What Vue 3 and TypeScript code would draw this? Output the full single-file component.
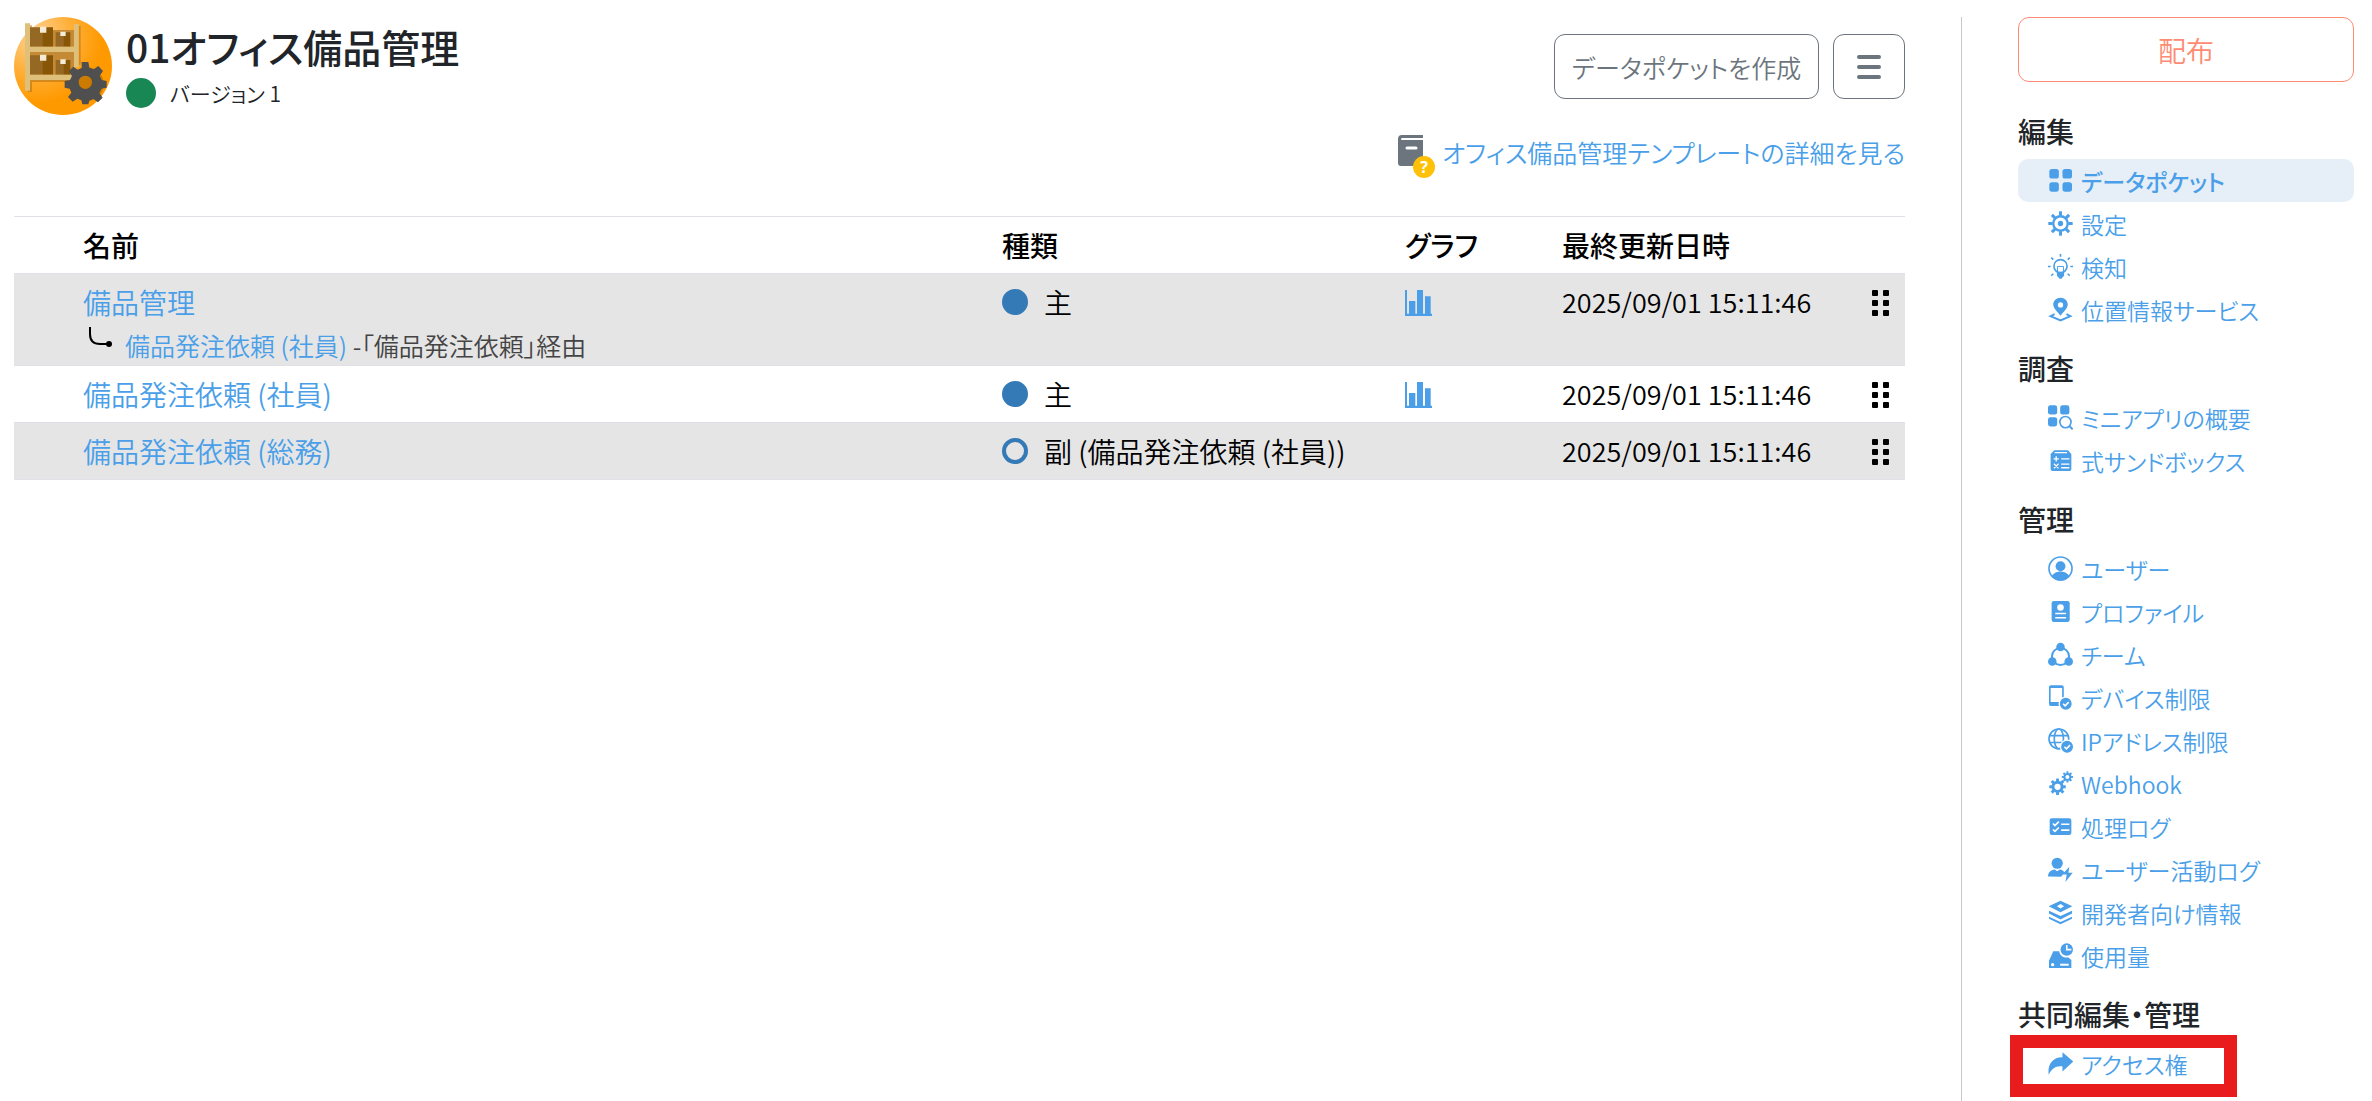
<script setup lang="ts">
interface NavItem {
  label: string
  icon: string
  active?: boolean
  marked?: boolean
}

interface NavSection {
  title: string
  items: NavItem[]
}

interface Pocket {
  name: string
  kind: string
  primary: boolean
  updated: string
  child?: { name: string; via: string }
}

const teeth = (cx: number, cy: number, from: number, to: number, width: number, step = 45): string => {
  let out = ''
  for (let a = 0; a < 360; a += step) {
    out += `<line x1="${cx}" y1="${cy - from}" x2="${cx}" y2="${cy - to}" stroke="currentColor" stroke-width="${width}" transform="rotate(${a} ${cx} ${cy})"/>`
  }
  return out
}

const badge = (cx: number, cy: number): string =>
  `<circle cx="${cx}" cy="${cy}" r="22" fill="#fff"/><circle cx="${cx}" cy="${cy}" r="18"/>` +
  `<path d="M${cx - 8} ${cy}l6 6 11-11" fill="none" stroke="#fff" stroke-width="5"/>`

const icons: Record<string, string> = {
  grid: '<rect x="4" y="3" width="29" height="29" rx="8"/><rect x="44" y="3" width="29" height="29" rx="8"/><rect x="4" y="43" width="29" height="29" rx="8"/><rect x="44" y="43" width="29" height="29" rx="8"/>',
  gear: '<circle cx="38" cy="38" r="22" fill="none" stroke="currentColor" stroke-width="7"/><circle cx="38" cy="38" r="8"/>' + teeth(38, 38, 24, 37, 9),
  bulb:
    '<circle cx="38" cy="37" r="20" fill="none" stroke="currentColor" stroke-width="5"/><path d="M29 54V38h18v16" fill="none" stroke="currentColor" stroke-width="3"/><path d="M27 54h22v10q0 4-4 6l-4 5h-6l-4-5q-4-2-4-6z"/>' +
    '<path d="M38 0v8M0 38h8M68 38h8M10 11l6 6M66 11l-6 6M10 66l6-6M66 66l-6-6" stroke="currentColor" stroke-width="5"/>',
  pin: '<path fill-rule="evenodd" d="M38 2c13 0 22 9 22 21 0 12-13 22-22 34C29 45 16 35 16 23 16 11 25 2 38 2zm0 14a8 8 0 1 0 0 16 8 8 0 0 0 0-16z"/><path d="M20 52L8 58l30 13 30-13-12-6" fill="none" stroke="currentColor" stroke-width="6"/>',
  overview:
    '<rect x="0" y="1" width="28" height="28" rx="7"/><rect x="37" y="1" width="28" height="28" rx="7"/><rect x="0" y="37" width="28" height="28" rx="7"/><circle cx="53" cy="52" r="22" fill="#fff"/><circle cx="53" cy="52" r="17" fill="none" stroke="currentColor" stroke-width="5"/><path d="M65 64l10 10" stroke="currentColor" stroke-width="6"/>',
  sandbox:
    '<path d="M19 7h42l10 11v46q0 6-6 6H14q-6 0-6-6V18z"/><g stroke="#fff" stroke-width="4" fill="none"><path d="M20 14h38M17 33h16M25 25v16M40 33h25M18 48l14 14M32 48L18 62M40 49h25M40 60h25"/></g>',
  user: '<circle cx="38" cy="38" r="35" fill="none" stroke="currentColor" stroke-width="5"/><circle cx="38" cy="31" r="15"/><path d="M11 61C20 49 29 47 38 47s18 2 27 14C52 79 24 79 11 61z"/>',
  profile: '<rect x="11" y="6" width="55" height="64" rx="7"/><circle cx="38" cy="26" r="10" fill="#fff"/><path d="M22 44h33M22 57h33" stroke="#fff" stroke-width="5"/>',
  team: '<circle cx="38" cy="44" r="26" fill="none" stroke="currentColor" stroke-width="6"/><circle cx="38" cy="15" r="13"/><circle cx="13" cy="59" r="13"/><circle cx="63" cy="59" r="13"/>',
  device:
    '<path fill-rule="evenodd" d="M9 1h33q6 0 6 6v57H9q-6 0-6-6V7q0-6 6-6zm-1 8v43h35V9z"/>' + badge(54, 57),
  globe:
    '<g fill="none" stroke="currentColor" stroke-width="5"><circle cx="33" cy="33" r="30"/><ellipse cx="33" cy="33" rx="14" ry="30"/><path d="M4 23h58M4 44h58"/></g>' + badge(58, 57),
  gears:
    '<circle cx="29" cy="48" r="14" fill="none" stroke="currentColor" stroke-width="9"/>' + teeth(29, 48, 16, 25, 9) +
    '<circle cx="59" cy="18" r="9" fill="none" stroke="currentColor" stroke-width="6"/>' + teeth(59, 18, 10, 17, 6),
  tasks:
    '<rect x="5" y="13" width="66" height="51" rx="7"/><g fill="none" stroke="#fff" stroke-width="5"><path d="M15 29l6 6 12-12M15 47l6 6 12-12M40 31h25M40 49h25"/></g>',
  activity:
    '<circle cx="28" cy="19" r="17"/><path d="M0 59c1-14 9-19 20-21l8 5 8-5c7 1 11 4 14 9L40 60z"/><path d="M65 30L43 53h14l-4 23 22-28H62z" fill="currentColor"/>',
  layers:
    '<path fill-rule="evenodd" d="M38 2l36 17-36 18L2 19zm0 10l-11 7 11 7 11-7z"/><path d="M3 33l35 16 35-16v8L38 59 3 41zM3 51l35 16 35-16v6L38 74 3 57z"/>',
  usage:
    '<path d="M16 25h18c2 14 14 21 28 19l9 8v24H3V54z"/><circle cx="57" cy="20" r="19"/><path d="M57 6v14h14" fill="none" stroke="#fff" stroke-width="5"/><circle cx="14" cy="66" r="5" fill="#fff"/><path d="M37 66h26" stroke="#fff" stroke-width="6"/>',
  share: '<path d="M44 4l33 28-33 30V47C24 44 11 54 2 72-2 42 14 18 44 19z"/>',
}

const sections: NavSection[] = [
  {
    title: '編集',
    items: [
      { label: 'データポケット', icon: 'grid', active: true },
      { label: '設定', icon: 'gear' },
      { label: '検知', icon: 'bulb' },
      { label: '位置情報サービス', icon: 'pin' },
    ],
  },
  {
    title: '調査',
    items: [
      { label: 'ミニアプリの概要', icon: 'overview' },
      { label: '式サンドボックス', icon: 'sandbox' },
    ],
  },
  {
    title: '管理',
    items: [
      { label: 'ユーザー', icon: 'user' },
      { label: 'プロファイル', icon: 'profile' },
      { label: 'チーム', icon: 'team' },
      { label: 'デバイス制限', icon: 'device' },
      { label: 'IPアドレス制限', icon: 'globe' },
      { label: 'Webhook', icon: 'gears' },
      { label: '処理ログ', icon: 'tasks' },
      { label: 'ユーザー活動ログ', icon: 'activity' },
      { label: '開発者向け情報', icon: 'layers' },
      { label: '使用量', icon: 'usage' },
    ],
  },
  {
    title: '共同編集・管理',
    items: [{ label: 'アクセス権', icon: 'share', marked: true }],
  },
]

const pockets: Pocket[] = [
  {
    name: '備品管理',
    kind: '主',
    primary: true,
    updated: '2025/09/01 15:11:46',
    child: { name: '備品発注依頼 (社員)', via: '-「備品発注依頼」経由' },
  },
  { name: '備品発注依頼 (社員)', kind: '主', primary: true, updated: '2025/09/01 15:11:46' },
  { name: '備品発注依頼 (総務)', kind: '副 (備品発注依頼 (社員))', primary: false, updated: '2025/09/01 15:11:46' },
]
</script>

<template>
  <div class="page">
    <main class="main">
      <header class="header">
        <svg class="avatar" viewBox="42 51 294 294" aria-hidden="true">
          <defs>
            <radialGradient id="disc" cx="0.22" cy="0.2" r="0.8">
              <stop offset="0" stop-color="#ffd296" />
              <stop offset="0.45" stop-color="#ffb03a" />
              <stop offset="0.85" stop-color="#ff9900" />
            </radialGradient>
          </defs>
          <circle cx="189" cy="198" r="147" fill="url(#disc)" />
          <g fill="#b87518" opacity="0.6">
            <path d="M88 76h8v200H84v-6h4zM236 78h6v116h-6zM92 240h112v6H92z" />
          </g>
          <path fill="#c48a35" d="M90 90h132v50H90zM90 156h132v68H90z" />
          <path fill="#956823" d="M90 82h37v58H90zM167 97h23v43h-23zM90 166h37v58H90zM167 180h23v44h-23z" />
          <path fill="#875707" d="M127 82h32v58h-32zM190 97h21v43h-21zM127 166h32v58h-32zM190 180h21v44h-21z" />
          <path fill="#f5ecd8" d="M120 80h19v18h-19zM181 95h16v13h-16zM120 164h19v18h-19zM181 178h16v14h-16z" />
          <path fill="#dfc07a" d="M75 70h15v202H75zM222 72h14v130h-14zM75 140h161v16H75zM75 224h150v16H75z" />
          <g transform="translate(256 247)">
            <g fill="#9a5c00" opacity="0.5" transform="translate(5 5)"><circle r="50" /></g>
            <g fill="#4f4f4f">
              <path
                fill-rule="evenodd"
                d="M-11-61H9l3 17 13 5 14-10 14 15-10 14 6 13 15 3V16l-16 3-6 13 10 14-14 14-14-10-12 5-3 11h-18l-3-12-12-5-14 9-14-14 10-13-5-12-15-3v-20l16-3 6-12-10-14 14-14 13 9 12-5zM0-20a20 20 0 1 0 0 40 20 20 0 0 0 0-40z"
              />
            </g>
          </g>
        </svg>
        <div class="heading">
          <h1 class="title">01オフィス備品管理</h1>
          <div class="version"><span class="status"></span>バージョン 1</div>
        </div>
        <div class="actions">
          <button type="button" class="btn create">データポケットを作成</button>
          <button type="button" class="btn menu" aria-label="メニュー">
            <svg viewBox="0 0 24 24" width="24" height="24" aria-hidden="true">
              <path d="M2 2h20M2 12h20M2 22h20" stroke="currentColor" stroke-width="4" stroke-linecap="round" />
            </svg>
          </button>
        </div>
      </header>

      <a class="guide" href="#">
        <svg viewBox="0 0 37 43" width="37" height="43" aria-hidden="true">
          <path fill="#6c757d" d="M4 0h21v3H4q-1 0-1 2h22v26H3q-3 0-3-3V4q0-4 4-4z" />
          <path stroke="#fff" stroke-width="3" stroke-linecap="round" d="M9 13h9" />
          <circle cx="26" cy="32" r="11" fill="#ffc107" />
          <text x="26" y="38" text-anchor="middle" class="mark">?</text>
        </svg>
        <span>オフィス備品管理テンプレートの詳細を見る</span>
      </a>

      <table class="pockets">
        <colgroup>
          <col class="c-lead" />
          <col />
          <col class="c-kind" />
          <col class="c-graph" />
          <col class="c-date" />
          <col class="c-grip" />
        </colgroup>
        <thead>
          <tr>
            <th></th>
            <th>名前</th>
            <th>種類</th>
            <th>グラフ</th>
            <th>最終更新日時</th>
            <th></th>
          </tr>
        </thead>
        <tbody>
          <tr v-for="p in pockets" :key="p.name">
            <td></td>
            <td :class="{ nested: p.child }">
              <a href="#">{{ p.name }}</a>
              <div v-if="p.child" class="child">
                <svg viewBox="0 0 24 22" width="24" height="22" aria-hidden="true">
                  <path d="M1 0v7q0 10 10 10h8" fill="none" stroke="#000" stroke-width="2" />
                  <circle cx="20" cy="17" r="3" />
                </svg>
                <span><a href="#">{{ p.child.name }}</a> {{ p.child.via }}</span>
              </div>
            </td>
            <td>
              <span class="kind"><span class="dot" :class="{ hollow: !p.primary }"></span>{{ p.kind }}</span>
            </td>
            <td>
              <a v-if="p.primary" href="#" class="graph" aria-label="グラフ">
                <svg viewBox="0 0 81 78" width="27" height="26" aria-hidden="true">
                  <path fill="currentColor" d="M0 0h6v71h6V33h19v38h5V0h18v71h6V19h17v52h4v7H0z" />
                </svg>
              </a>
            </td>
            <td class="date">{{ p.updated }}</td>
            <td>
              <svg class="grip" viewBox="0 0 17 26" width="17" height="26" aria-hidden="true">
                <g>
                  <rect width="6" height="6" rx="1" /><rect x="11" width="6" height="6" rx="1" />
                  <rect y="10" width="6" height="6" rx="1" /><rect x="11" y="10" width="6" height="6" rx="1" />
                  <rect y="20" width="6" height="6" rx="1" /><rect x="11" y="20" width="6" height="6" rx="1" />
                </g>
              </svg>
            </td>
          </tr>
        </tbody>
      </table>
    </main>

    <aside class="side">
      <button type="button" class="btn deploy">配布</button>
      <nav>
        <section v-for="s in sections" :key="s.title" class="group">
          <h2>{{ s.title }}</h2>
          <ul>
            <li v-for="i in s.items" :key="i.label" :class="{ marked: i.marked }">
              <a href="#" class="item" :class="{ active: i.active }">
                <svg viewBox="0 0 76 76" width="25" height="25" fill="currentColor" aria-hidden="true" v-html="icons[i.icon]"></svg>
                <span>{{ i.label }}</span>
              </a>
            </li>
          </ul>
        </section>
      </nav>
    </aside>
  </div>
</template>

<style>
body {
  margin: 0;
  background: #fff;
}
</style>

<style scoped>
.page {
  display: flex;
  min-height: 100vh;
  box-sizing: border-box;
  font-family: "Noto Sans CJK JP", sans-serif;
  font-feature-settings: "palt";
  font-size: 28px;
  font-weight: 350;
  line-height: 34px;
  color: #212529;
}
a {
  color: #4a9fe8;
  text-decoration: none;
}
.main {
  flex: 1;
  min-width: 0;
  padding: 17px 56px 0 14px;
}
.header {
  display: flex;
  gap: 14px;
}
.avatar {
  width: 98px;
  height: 98px;
  flex: none;
}
.heading {
  flex: 1;
}
.title {
  margin: 0;
  font-size: 39px;
  line-height: 58px;
  font-weight: 500;
}
.version {
  display: flex;
  align-items: center;
  gap: 14px;
  font-size: 21px;
  line-height: 36px;
}
.status {
  width: 30px;
  height: 30px;
  border-radius: 50%;
  background: #198754;
}
.actions {
  display: flex;
  align-items: flex-start;
  gap: 14px;
  padding-top: 17px;
}
.btn {
  display: flex;
  align-items: center;
  justify-content: center;
  box-sizing: border-box;
  height: 65px;
  padding: 0 21px;
  border: 1px solid #6c757d;
  border-radius: 11px;
  background: #fff;
  color: #6c757d;
  font: inherit;
  font-feature-settings: inherit;
}
.create {
  width: 265px;
  font-size: 25px;
  white-space: nowrap;
}
.menu {
  width: 72px;
}
.guide {
  display: flex;
  justify-content: flex-end;
  gap: 7px;
  margin: 20px 0 38px;
  font-size: 25px;
}
.mark {
  font: 700 16px "Noto Sans", sans-serif;
  fill: #fff;
}
.pockets {
  width: 100%;
  border-collapse: collapse;
  table-layout: fixed;
  color: #000;
}
.c-lead {
  width: 55px;
}
.c-kind {
  width: 403px;
}
.c-graph {
  width: 157px;
}
.c-date {
  width: 310px;
}
.c-grip {
  width: 47px;
}
th,
td {
  padding: 11px 14px;
  border-bottom: 1px solid #dee2e6;
  text-align: left;
  vertical-align: top;
}
th {
  border-top: 1px solid #dee2e6;
  font-weight: 500;
}
tbody tr:nth-child(odd) {
  background: #e5e5e5;
}
.nested {
  padding-bottom: 5px;
}
.child {
  display: flex;
  gap: 12px;
  margin: 12px 0 0 6px;
  padding-bottom: 1px;
  font-size: 25px;
  line-height: 28px;
  color: #444;
}
.child svg {
  margin-top: -4px;
}
.kind {
  display: flex;
  align-items: center;
  gap: 16px;
}
.dot {
  box-sizing: border-box;
  width: 26px;
  height: 26px;
  border: 4px solid #337ab7;
  border-radius: 50%;
  background: #337ab7;
}
.hollow {
  background: transparent;
}
.graph,
.grip {
  display: block;
  height: 26px;
  padding-top: 5px;
}
.graph svg {
  display: block;
}
.date {
  font-size: 27px;
  white-space: nowrap;
}
.side {
  width: 411px;
  flex: none;
  box-sizing: border-box;
  margin-top: 17px;
  padding: 0 18px 0 56px;
  border-left: 1px solid #c8c8c8;
}
.deploy {
  width: 100%;
  margin-bottom: 32px;
  border-color: #ff8b73;
  color: #ff8b73;
}
.group + .group {
  margin-top: 20px;
}
h2 {
  margin: 0 0 11px;
  font-size: 28px;
  line-height: 34px;
  font-weight: 500;
}
ul {
  margin: 0;
  padding: 0;
  list-style: none;
}
.item {
  display: flex;
  align-items: center;
  gap: 8px;
  height: 43px;
  padding-left: 30px;
  border-radius: 10px;
  font-size: 23px;
}
.item svg {
  flex: none;
}
.active {
  background: #e6eff7;
  font-weight: 500;
}
.marked {
  position: relative;
}
.marked::after {
  content: "";
  position: absolute;
  top: -7px;
  left: -8px;
  box-sizing: border-box;
  width: 227px;
  height: 62px;
  border: 13px solid #e81c1c;
  pointer-events: none;
}
</style>
